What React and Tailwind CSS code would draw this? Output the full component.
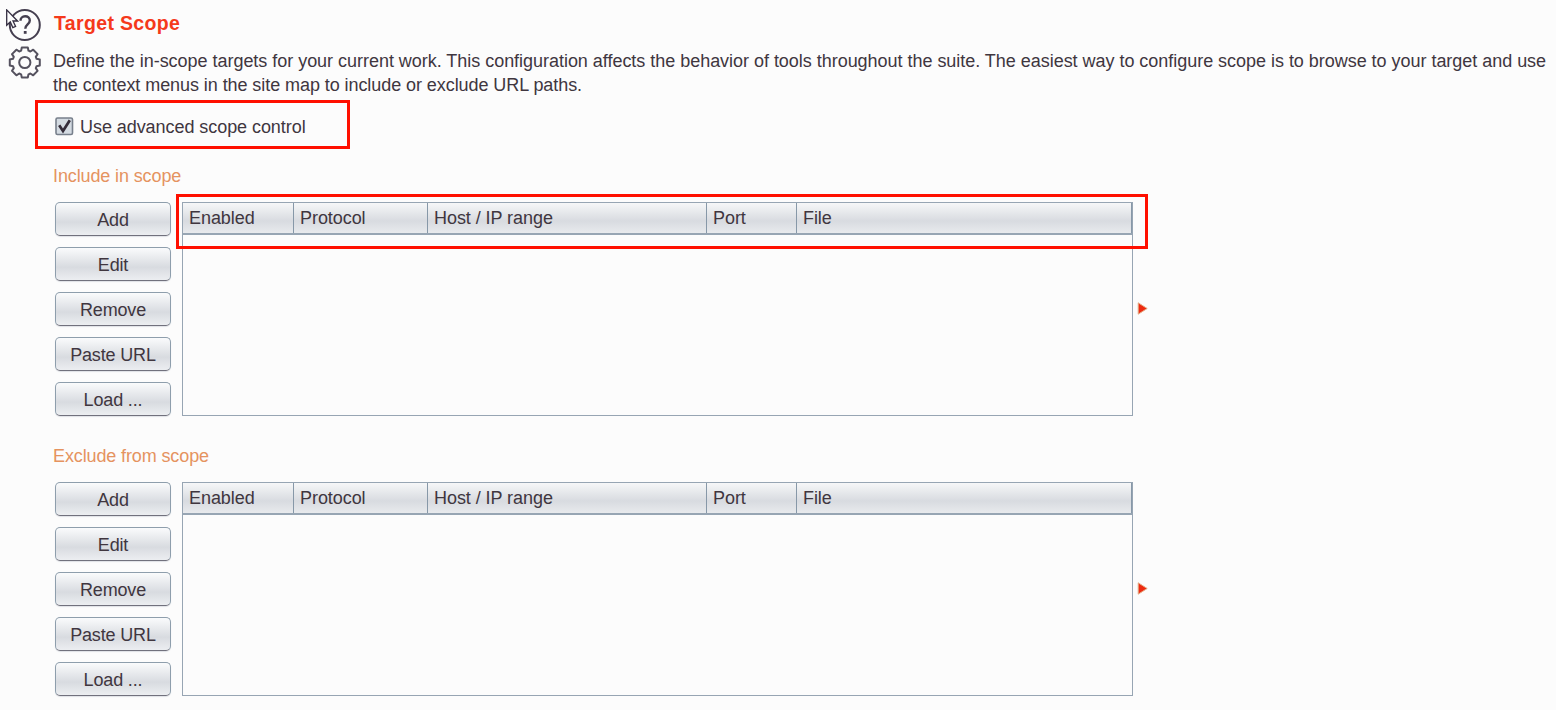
const COLUMNS = [
  { label: "Enabled", width: "w-[111px]" },
  { label: "Protocol", width: "w-[134px]" },
  { label: "Host / IP range", width: "w-[279px]" },
  { label: "Port", width: "w-[90px]" },
  { label: "File", width: "w-[335px]" },
];

const ACTIONS = ["Add", "Edit", "Remove", "Paste URL", "Load ..."];

function HelpIcon() {
  return (
    <svg className="block h-[34px] w-[34px]" viewBox="0 0 34 34" fill="none" stroke="#453f50">
      <circle cx="16.8" cy="17" r="15" strokeWidth="2" />
      <path d="M12.5 12.8c0-2.8 1.9-4.5 4.6-4.5s4.7 1.7 4.7 4.2c0 4-4.5 4-4.5 8.2" strokeWidth="2.4" />
      <path d="M17.2 23v2.8" strokeWidth="2.8" />
    </svg>
  );
}

function GearIcon() {
  return (
    <svg className="block h-[34px] w-[34px]" viewBox="-16.8 -16.5 34 34" fill="none" stroke="#55525f" strokeWidth="2" strokeLinejoin="round">
      <path d="M-3-15H3L3.7-11.8 5.6-11 8.4-12.8 12.8-8.4 11-5.6 11.8-3.7 15-3V3L11.8 3.7 11 5.6 12.8 8.4 8.4 12.8 5.6 11 3.7 11.8 3 15H-3L-3.7 11.8-5.6 11-8.4 12.8-12.8 8.4-11 5.6-11.8 3.7-15 3V-3L-11.8-3.7-11-5.6-12.8-8.4-8.4-12.8-5.6-11-3.7-11.8Z" />
      <circle r="5.6" />
    </svg>
  );
}

function Cursor() {
  return (
    <svg className="absolute left-[6px] top-[9px] h-[20px] w-[13px]" viewBox="0 0 13 20">
      <path d="M.7.9V16.2L4.3 12.9 6.8 18.6 9.6 17.4 7 12H11.5Z" fill="#fcfcfc" stroke="#352f42" strokeWidth="1.3" />
    </svg>
  );
}

function ActionButton({ label }) {
  return (
    <button className="h-[34px] w-[116px] rounded-[5px] border border-[#8e9eac] border-b-[#71717d] bg-linear-to-b from-[#fafbfc] via-[#d8dbe0] via-60% to-[#eceef1] pt-px text-[18px] leading-[30px] tracking-[-0.15px] shadow-[0_1px_1px_#dfe2e6]">
      {label}
    </button>
  );
}

function ScopeTable() {
  return (
    <div className="h-[214px] w-[951px] border border-[#97a5b3]">
      <div className="flex h-[32px] border-b-2 border-[#97a5b3] bg-linear-to-b from-[#f6f7f8] via-[#d8dbe0] via-60% to-[#e8eaed]">
        {COLUMNS.map((c) => (
          <div key={c.label} className={`${c.width} shrink-0 border-r border-[#8798a8] pl-[6px] text-[18px] leading-[31px] tracking-[-0.06px]`}>
            {c.label}
          </div>
        ))}
      </div>
    </div>
  );
}

function ScopeSection({ title, children }) {
  return (
    <section>
      <h2 className="h-[36px] text-[18px] leading-[20px] tracking-[-0.12px] text-[#e5935f]">{title}</h2>
      <div className="flex h-[214px] items-center">
        <div className="ml-[2px] mr-[11px] flex w-[116px] flex-col gap-[11px]">
          {ACTIONS.map((a) => (
            <ActionButton key={a} label={a} />
          ))}
        </div>
        <div className="relative">
          <ScopeTable />
          {children}
        </div>
        <svg className="mb-[2px] ml-[4px] h-[13px] w-[11px]" viewBox="0 0 11 13">
          <path d="M1.2.8 10.2 6.5 1.2 12.2Z" fill="#ee2a10" stroke="#e3b08a" strokeWidth="1" />
        </svg>
      </div>
    </section>
  );
}

export default function App() {
  return (
    <main className="relative flex h-[710px] w-[1556px] overflow-hidden bg-[#fcfcfc] font-['Liberation_Sans',Arial,sans-serif] text-[#40363f]">
      <div className="flex w-[53px] shrink-0 flex-col gap-[4px] pl-[8px] pt-[8px]">
        <HelpIcon />
        <GearIcon />
      </div>
      <Cursor />
      <div className="pt-[12px]">
        <h1 className="h-[37px] pl-px text-[19.5px] font-bold leading-[23px] tracking-[0.35px] text-[#f5391b]">Target Scope</h1>
        <p className="text-[18px] leading-[24px] tracking-[-0.03px] whitespace-nowrap">
          Define the in-scope targets for your current work. This configuration affects the behavior of tools throughout the suite. The easiest way to configure scope is to browse to your target and use
          <br />
          <span className="tracking-[-0.07px]">the context menus in the site map to include or exclude URL paths.</span>
        </p>
        <div className="-ml-[18px] mt-[3px] flex h-[49px] w-[315px] items-center border-3 border-[#ff0f00] pl-[17px]">
          <svg className="mt-[3px] h-[19px] w-[19px]" viewBox="0 0 19 19">
            <rect x="1" y="1" width="16.5" height="16.5" rx="1.5" fill="#d4dbe2" stroke="#777f8b" strokeWidth="1.6" />
            <path d="M4.2 8.2 8 14 14.8 3.2" fill="none" stroke="#352d3a" strokeWidth="2.7" />
          </svg>
          <span className="ml-[6px] pt-[4px] text-[18px] leading-[20px] tracking-[-0.06px]">Use advanced scope control</span>
        </div>
        <div className="mt-[17px] flex flex-col gap-[30px]">
          <ScopeSection title="Include in scope">
            <div className="absolute -left-[6px] -top-[8px] h-[55px] w-[972px] border-3 border-[#ff0f00]" />
          </ScopeSection>
          <ScopeSection title="Exclude from scope" />
        </div>
      </div>
    </main>
  );
}
